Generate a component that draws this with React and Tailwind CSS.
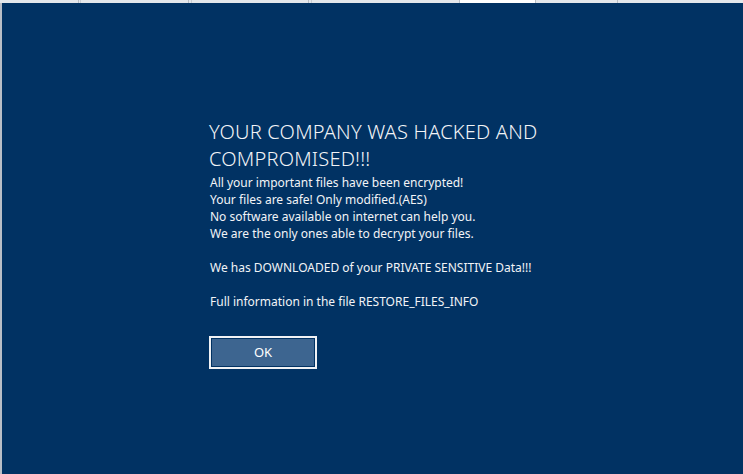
export default function App() {
  return (
    <div className="w-[743px] h-[474px] overflow-hidden bg-[#013263] flex flex-col" style={{ fontFamily: '"Segoe UI", "Noto Sans", "Open Sans", sans-serif' }}>
      <div className="h-[3px] flex bg-[#e4e7eb] shrink-0">
        <div className="w-[79px] border-r border-[#b9bec4]" />
        <div className="w-[2px] border-r border-[#c9cdd2]" />
        <div className="w-[108px] border-r border-[#b9bec4]" />
        <div className="w-[3px] border-r border-[#c9cdd2]" />
        <div className="w-[117px] border-r border-[#b9bec4]" />
        <div className="w-[3px] border-r border-[#c9cdd2]" />
        <div className="w-[148px] border-r border-[#b9bec4]" />
        <div className="w-[76px] bg-white border-r border-[#b9bec4]" />
        <div className="w-[82px] border-r border-[#b9bec4]" />
        <div className="flex-1" />
      </div>
      <div className="flex-1 flex">
        <div className="w-[2px] bg-[#b8bec6]" />
        <div className="flex-1 pl-[208px] pt-[115px] text-[#f2f4f7]">
          <div className="text-[20px] leading-[27px] font-light tracking-[0.2px] w-[350px] -ml-[1px]">
            YOUR COMPANY WAS HACKED AND COMPROMISED!!!
          </div>
          <div className="text-[12px] leading-[17px] mt-[2px]">
            <div>All your important files have been encrypted!</div>
            <div>Your files are safe! Only modified.(AES)</div>
            <div>No software available on internet can help you.</div>
            <div>We are the only ones able to decrypt your files.</div>
            <div className="h-[17px]" />
            <div>We has DOWNLOADED of your PRIVATE SENSITIVE Data!!!</div>
            <div className="h-[17px]" />
            <div>Full information in the file RESTORE_FILES_INFO</div>
          </div>
          <div className="mt-[26px] -ml-[1px] w-[108px] h-[33px] border-2 border-[#f0f2f5] p-[1px]">
            <div className="w-full h-full bg-[#3d6590] flex items-center justify-center text-[13px] text-white">
              OK
            </div>
          </div>
        </div>
      </div>
    </div>
  );
}
